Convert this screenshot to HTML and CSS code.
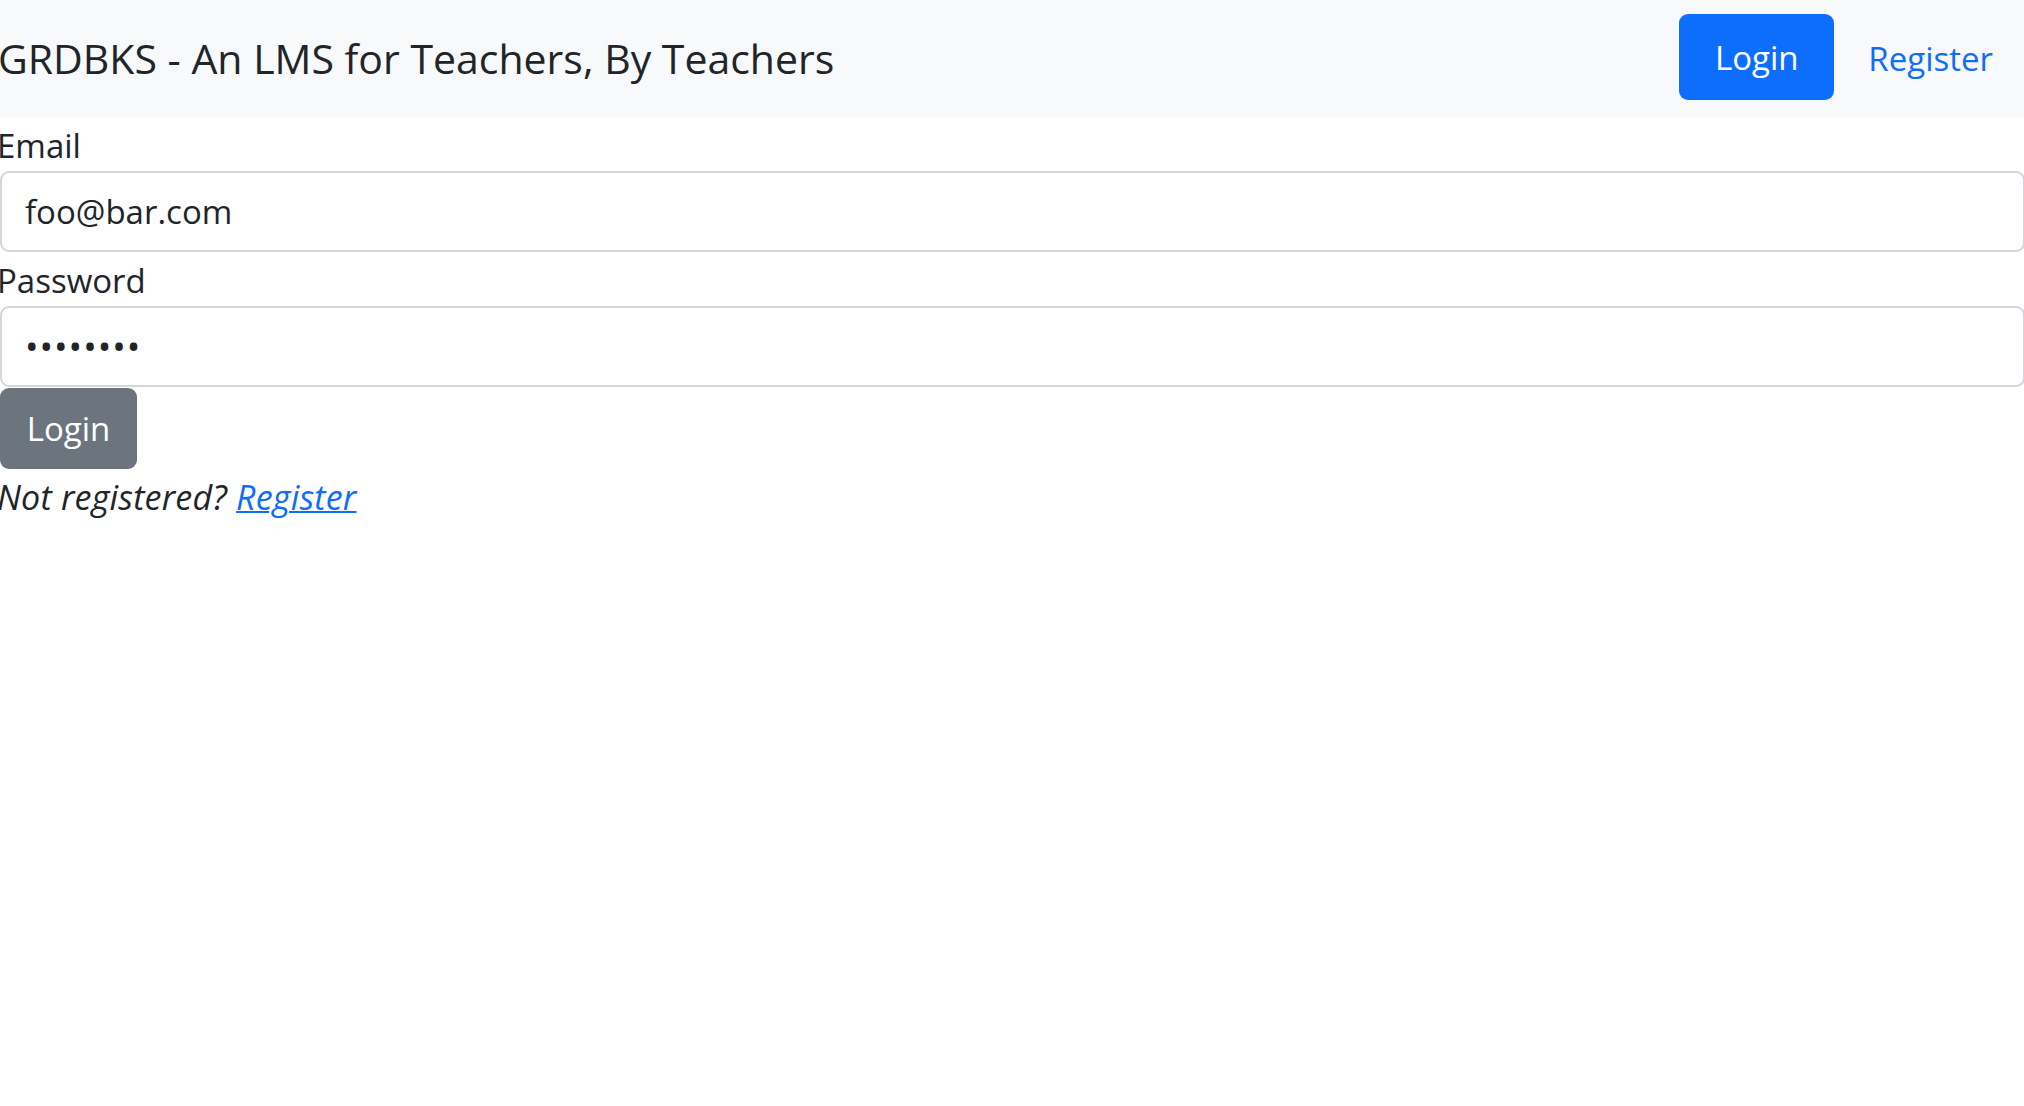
FILE: index.html
```html
<!DOCTYPE html>
<html lang="en">
<head>
<meta charset="utf-8">
<title>GRDBKS</title>
<link rel="stylesheet" href="styles.css">
</head>
<body>
<nav class="navbar">
  <span class="brand">GRDBKS - An LMS for Teachers, By Teachers</span>
  <div class="nav-right">
    <a class="btn-primary" href="#">Login</a>
    <a class="nav-link" href="#">Register</a>
  </div>
</nav>
<form class="login-form">
  <label class="form-label" for="email">Email</label>
  <input class="form-control" id="email" type="email" value="foo@bar.com">
  <label class="form-label" for="password">Password</label>
  <input class="form-control password" id="password" type="password" value="12345678">
  <button class="btn-secondary" type="button">Login</button>
  <p class="note"><em>Not registered? <a class="note-link" href="#">Register</a></em></p>
</form>
</body>
</html>
```

FILE: styles.css
```css
html, body {
  margin: 0;
  padding: 0;
  background: #ffffff;
}

body {
  font-family: "Open Sans", "Noto Sans", "Liberation Sans", sans-serif;
  font-size: 33px;
  color: #212529;
}

.navbar {
  height: 117px;
  background: #f8f9fa;
  display: flex;
  align-items: center;
  justify-content: space-between;
  padding: 0 31px 0 0;
  box-sizing: border-box;
}

.brand {
  font-size: 41px;
  line-height: 1;
  margin-left: -2px;
  margin-top: -1px;
  color: #212529;
}

.nav-right {
  display: flex;
  align-items: center;
  gap: 34px;
}

.btn-primary {
  display: flex;
  align-items: center;
  justify-content: center;
  width: 155px;
  height: 86px;
  box-sizing: border-box;
  background: #0d6efd;
  color: #ffffff;
  border-radius: 9px;
  text-decoration: none;
  margin-top: -3px;
}

.nav-link {
  color: #0d6efd;
  text-decoration: none;
}

.login-form {
  display: flex;
  flex-direction: column;
  align-items: flex-start;
}

.form-label {
  display: block;
  height: 54px;
  box-sizing: border-box;
  padding-top: 5px;
  line-height: 48px;
  margin-left: -3px;
}

.form-control {
  display: block;
  width: calc(100% + 1px);
  height: 81px;
  box-sizing: border-box;
  border: 2px solid #d3d7dc;
  border-radius: 9px;
  padding: 0 23px;
  font-family: inherit;
  font-size: 33px;
  color: #212529;
  background: #ffffff;
  outline: none;
  margin: 0;
}

.password {
  font-size: 36px;
  letter-spacing: 1px;
}

.btn-secondary {
  margin-top: 1px;
  width: 137px;
  height: 81px;
  box-sizing: border-box;
  background: #6c757d;
  color: #ffffff;
  border: none;
  border-radius: 9px;
  font-family: inherit;
  font-size: 33px;
  padding: 0;
  cursor: pointer;
}

.note {
  margin: 0;
  height: 51px;
  box-sizing: border-box;
  padding-top: 3px;
  line-height: 50px;
  margin-left: -3px;
  font-size: 34px;
  letter-spacing: 0.2px;
}

.note-link {
  color: #0d6efd;
  text-decoration: underline;
  text-decoration-thickness: 2px;
}
```
